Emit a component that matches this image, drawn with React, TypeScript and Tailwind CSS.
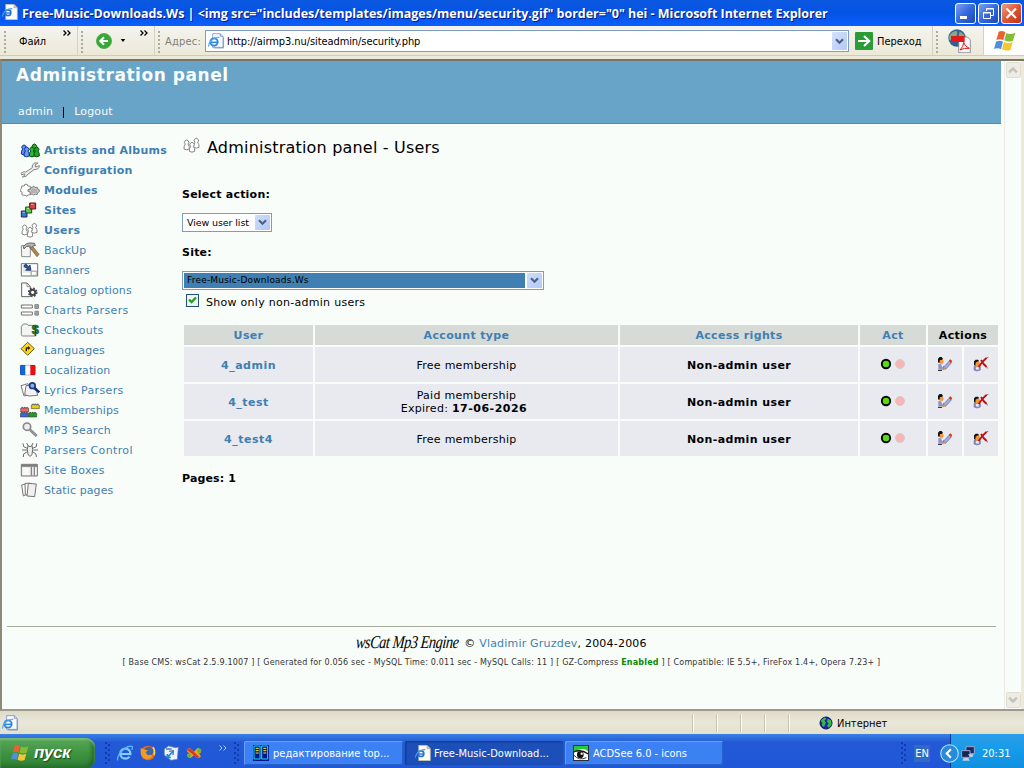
import React from 'react';

type Children = { children?: React.ReactNode };

const VERDANA = "font-['DejaVu_Sans',sans-serif]";
const TAHOMA = "font-['DejaVu_Sans_Condensed','DejaVu_Sans',sans-serif] [font-stretch:condensed]";
const TREBUCHET = "font-['Open_Sans',sans-serif]";

/* ---------- icons: 60 unit boxes drawn at 20px ---------- */

function Icon({ children }: Children) {
  return (
    <svg viewBox="0 0 60 60" className="h-5 w-5 shrink-0" strokeLinejoin="round">
      {children}
    </svg>
  );
}

function Person({ x, y, fill, stroke }: { x: number; y: number; fill: string; stroke: string }) {
  return (
    <path
      transform={`translate(${x} ${y})`}
      d="M5 13A6.5 6.5 0 1 1 13 13Q18 19 17 28Q9 33 1 28Q0 19 5 13Z"
      fill={fill}
      stroke={stroke}
      strokeWidth="3"
    />
  );
}

function UsersShape() {
  return (
    <>
      <Person x={5} y={14} fill="#fff" stroke="#858585" />
      <Person x={34} y={9} fill="#fff" stroke="#858585" />
      <Person x={21} y={21} fill="#fff" stroke="#858585" />
    </>
  );
}

const ArtistsIcon = () => (
  <Icon>
    <Person x={3} y={14} fill="#5a8bff" stroke="#15338c" />
    <Person x={11} y={20} fill="#6b95ff" stroke="#15338c" />
    <Person x={34} y={11} fill="#25b32b" stroke="#064d0c" />
    <Person x={27} y={20} fill="#2cb533" stroke="#064d0c" />
    <Person x={41} y={20} fill="#1fa526" stroke="#064d0c" />
  </Icon>
);
const WrenchIcon = () => (
  <Icon>
    <path
      d="M3 40L11 35L17 36L37 23L37 15Q43 6 54 9L45 15L47 21L58 17Q58 29 42 29L24 42Q21 52 7 51L15 45L13 41L5 45Z"
      fill="#ececec"
      stroke="#848484"
      strokeWidth="3"
    />
  </Icon>
);
const ModulesIcon = () => (
  <Icon>
    <path
      d="M5 18L13 18L14 13L22 13L23 18L31 19L31 27L24 29L24 34L32 36L32 44L23 45L21 49L15 46L6 45L6 36L1 34L1 28L5 26Z"
      fill="#fff"
      stroke="#8a8a8a"
      strokeWidth="3"
    />
    <path
      d="M31 22L38 22L40 18L45 22L52 22L53 27L58 29L58 35L53 38L52 43L45 43L41 45L37 43L30 42L31 36L25 34L25 29L31 28Z"
      fill="#c9c9c9"
      stroke="#858585"
      strokeWidth="3"
    />
    <path d="M36 26v13M42 26v13M48 26v13" stroke="#858585" strokeWidth="2" />
  </Icon>
);
const SitesIcon = () => (
  <Icon>
    <path d="M4 33h17v18H4z" fill="#426fd8" stroke="#1a2a50" strokeWidth="3" />
    <path d="M17 21h18v18H17z" fill="#57cf54" stroke="#1a4b17" strokeWidth="3" />
    <path d="M29 9h18v18H29z" fill="#d44343" stroke="#5a1818" strokeWidth="3" />
    <path d="M8 37h7M21 25h8M33 13h8" stroke="#fff" strokeOpacity=".55" strokeWidth="3" />
  </Icon>
);
const UsersIcon = () => (
  <Icon>
    <UsersShape />
  </Icon>
);
const BackupIcon = () => (
  <Icon>
    <path d="M4 17L25 16L31 23L31 50L5 50Z" fill="#f5f5f5" stroke="#8d8d8d" strokeWidth="3" />
    <path d="M29 22L36 17L57 43L51 50Z" fill="#b28a50" stroke="#654719" strokeWidth="2" />
    <path d="M10 20Q18 8 33 9L44 10L46 17L38 18L34 23L28 18Q18 17 12 27Z" fill="#b7b7b7" stroke="#666" strokeWidth="3" />
  </Icon>
);
const BannersIcon = () => (
  <Icon>
    <rect x="4" y="11" width="49" height="37" fill="#fff" stroke="#707070" strokeWidth="3" />
    <path d="M8 38h24V15H8Z" fill="#e5e5ec" />
    <path d="M33 46V33h18M34 34h15v12H34z" fill="#fff" stroke="#999" strokeWidth="2" />
    <path d="M13 15L18 12L25 20L30 15L33 31L17 31L22 25L12 20Z" fill="#2454a0" stroke="#0c2350" strokeWidth="2" />
  </Icon>
);
const CatalogIcon = () => (
  <Icon>
    <path d="M5 9H21L31 20V50H5Z" fill="#fff" stroke="#606060" strokeWidth="3" />
    <path d="M21 10V20H30" fill="none" stroke="#606060" strokeWidth="2" />
    <circle cx="38" cy="37" r="12" fill="none" stroke="#45484d" strokeWidth="5" strokeDasharray="5 4.4" />
    <circle cx="38" cy="37" r="8" fill="#fff" stroke="#45484d" strokeWidth="6" />
  </Icon>
);
const ChartsIcon = () => (
  <Icon>
    <path d="M4 15h33v9H4zM4 36h33v9H4z" fill="#fff" stroke="#737373" strokeWidth="3" />
    <rect x="43" y="12" width="14" height="15" rx="4" fill="#8b8b8b" />
    <rect x="43" y="32" width="14" height="15" rx="4" fill="#8b8b8b" />
    <path d="M46 17h8M46 22h8M46 37h8M46 42h8" stroke="#bcbcbc" strokeWidth="2" />
  </Icon>
);
const CheckoutsIcon = () => (
  <Icon>
    <path d="M4 20Q4 16 8 16L10 12H21L24 16H42Q47 16 47 20V48H8Q4 48 4 44Z" fill="#f4f4f4" stroke="#858585" strokeWidth="3" />
    <text x="35" y="42" fontSize="38" fontWeight="700" fill="#17902b" stroke="#0a5015" strokeWidth="2" fontFamily="Liberation Sans">
      $
    </text>
  </Icon>
);
const LanguagesIcon = () => (
  <Icon>
    <path d="M23 7L43 26L23 46L3 26Z" fill="#ffd51d" stroke="#6b5a19" strokeWidth="3" />
    <path d="M19 34V24H26" fill="none" stroke="#222" strokeWidth="4" />
    <path d="M24 18L31 24L24 30Z" fill="#222" />
  </Icon>
);
const LocalizationIcon = () => (
  <Icon>
    <rect x="1" y="16" width="45" height="29" rx="3" fill="#fff" />
    <path d="M4 15H16V45H4Q0 45 0 41V19Q0 15 4 15" fill="#1267d8" />
    <path d="M31 15H43Q46 15 46 19V41Q46 45 43 45H31Z" fill="#f00c0c" />
    <rect x="1" y="16" width="45" height="29" rx="3" fill="none" stroke="#202a70" strokeOpacity=".45" strokeWidth="2" />
  </Icon>
);
const LyricsIcon = () => (
  <Icon>
    <path d="M3 17L24 11L33 43L12 48Z" fill="#fff" stroke="#777" strokeWidth="3" />
    <path d="M18 17L45 14L53 46L27 48L14 44Z" fill="#f2f2f5" stroke="#777" strokeWidth="3" />
    <path d="M43 24L58 37" stroke="#152b65" strokeWidth="8" />
    <circle cx="37" cy="17" r="8.5" fill="#8fb0e4" stroke="#1b3c88" strokeWidth="5" />
  </Icon>
);
const Brick = ({ x, y, fill }: { x: number; y: number; fill: string }) => (
  <path
    transform={`translate(${x} ${y})`}
    d="M1 4H4V1H8V4H11V1H15V4H18V1H22V4H25V15H1Z"
    fill={fill}
    stroke="#3a2922"
    strokeWidth="1.6"
  />
);
const MembershipsIcon = () => (
  <Icon>
    <Brick x={33} y={11} fill="#dfcf1d" />
    <Brick x={1} y={21} fill="#e76b6b" />
    <Brick x={0} y={36} fill="#3869da" />
    <Brick x={25} y={36} fill="#1f9e2c" />
  </Icon>
);
const SearchIcon = () => (
  <Icon>
    <path d="M30 29L50 48" stroke="#818181" strokeWidth="8" />
    <path d="M32 31L49 47" stroke="#bdbdbd" strokeWidth="2" />
    <circle cx="21" cy="20" r="11" fill="#ededed" stroke="#858585" strokeWidth="5" />
  </Icon>
);
const SpiderIcon = () => (
  <Icon>
    <path
      d="M22 25L11 20L9 10M38 25L49 20L50 10M21 30H6M40 30H54M22 35L11 42L10 51M38 35L48 42L49 51M25 18L20 9M35 18L39 9"
      fill="none"
      stroke="#6c6c6c"
      strokeWidth="3"
    />
    <path d="M24 17L30 20L36 17L38 28L36 44L30 49L24 44L22 28Z" fill="#efefef" stroke="#6c6c6c" strokeWidth="3" />
  </Icon>
);
const BoxesIcon = () => (
  <Icon>
    <rect x="4" y="13" width="48" height="35" fill="#e7e7e7" stroke="#747474" strokeWidth="3" />
    <path d="M5 17H52" stroke="#7d7d7d" strokeWidth="7" />
    <path d="M8 23H29V45H8Z" fill="#f8f8f8" />
    <path d="M34 21V47M43 21V47" stroke="#707070" strokeWidth="3" />
    <path d="M47.5 24V45" stroke="#fff" strokeWidth="3" />
  </Icon>
);
const PagesIcon = () => (
  <Icon>
    <path d="M5 15L17 12V44L10 48Z" fill="#fff" stroke="#777" strokeWidth="3" />
    <path d="M15 10H34V45H16Z" fill="#fff" stroke="#777" strokeWidth="3" />
    <path d="M25 10L49 12L44 50L21 48Z" fill="#f0f0f0" stroke="#747474" strokeWidth="3" />
  </Icon>
);

function IePageIcon({ className }: { className: string }) {
  return (
    <svg viewBox="0 0 48 48" className={className}>
      <path d="M14 2H37L45 10V43H14Z" fill="#f8faff" stroke="#5f7ebd" strokeWidth="2" />
      <path d="M37 2V10H45" fill="#d3def2" stroke="#5f7ebd" strokeWidth="2" />
      <path d="M17 45H47V13" fill="none" stroke="#6379aa" strokeWidth="2" />
      <circle cx="18" cy="27" r="11" fill="#fff" fillOpacity=".7" stroke="#2c86dd" strokeWidth="5.5" />
      <path d="M8 28H29" stroke="#2c86dd" strokeWidth="4.5" />
      <path d="M2 41C0 29 17 10 34 13" fill="none" stroke="#55a9ef" strokeWidth="3.5" />
    </svg>
  );
}

function IeDocumentIcon({ className }: { className: string }) {
  return (
    <svg viewBox="0 0 48 48" className={className}>
      <path d="M11 1H36L46 11V47H11Z" fill="#fbfbf6" stroke="#b5b39f" strokeWidth="2" />
      <path d="M36 1V11H46Z" fill="#d6d4c6" stroke="#8f8d80" strokeWidth="1.5" />
      <circle cx="18" cy="26" r="8.5" fill="#fff" stroke="#2370d8" strokeWidth="5" />
      <path d="M11 27H27" stroke="#2370d8" strokeWidth="4" />
      <path d="M2 38C0 29 14 12 31 14" fill="none" stroke="#4d9cec" strokeWidth="3.5" />
    </svg>
  );
}

function WindowsFlag({ className }: { className: string }) {
  return (
    <svg viewBox="0 0 72 66" className={className}>
      <path d="M17 5Q27 0 37 7L31 31Q20 25 10 31Z" fill="#e9632e" />
      <path d="M40 9Q51 15 67 8L60 32Q47 38 34 31Z" fill="#83bd35" />
      <path d="M9 35Q20 29 30 35L24 58Q14 52 3 57Z" fill="#4e90dc" />
      <path d="M33 36Q46 42 59 36L53 59Q41 65 27 58Z" fill="#f6c52f" />
    </svg>
  );
}

/* ---------- window chrome ---------- */

function Chevron({ color = '#4d6185', className = 'h-[9px] w-[9px]' }: { color?: string; className?: string }) {
  return (
    <svg viewBox="0 0 9 9" className={className}>
      <path d="M1 2.3L4.5 5.8L8 2.3" fill="none" stroke={color} strokeWidth="2.2" />
    </svg>
  );
}

function Grip() {
  return (
    <div className="flex h-[24px] w-[3px] shrink-0 flex-col justify-between py-[1px]">
      {[0, 1, 2, 3, 4, 5].map((n) => (
        <i key={n} className="h-[2px] w-[2px] bg-[#aeab9c]" />
      ))}
    </div>
  );
}

function CaptionButton({ close, children }: Children & { close?: boolean }) {
  return (
    <div
      className={
        close
          ? 'flex h-[21px] w-[21px] items-center justify-center rounded-[3px] border border-white bg-linear-to-br from-[#ee9c83] via-[#df5534] to-[#bd3314]'
          : 'flex h-[21px] w-[21px] items-center justify-center rounded-[3px] border border-white bg-linear-to-br from-[#7da0ef] via-[#3468dc] to-[#1c49bd]'
      }
    >
      <svg viewBox="0 0 19 19" className="h-[19px] w-[19px]" fill="none" stroke="#fff">
        {children}
      </svg>
    </div>
  );
}

function TitleBar() {
  return (
    <header className="flex h-[26px] shrink-0 items-center bg-linear-to-b from-[#0b58df] via-[#0453e4] to-[#0a5fff] pr-[2px] pl-[2px]">
      <IeDocumentIcon className="mb-[2px] h-4 w-4 shrink-0" />
      <h1
        className={`${TREBUCHET} ml-[4px] w-[934px] pt-[2px] text-[12.5px] font-bold tracking-[-0.02px] whitespace-pre text-white [text-shadow:1px_1px_0_#0a1883]`}
      >
        {'Free-Music-Downloads.Ws | <img src="includes/templates/images/menu/security.gif" border="0" hei - Microsoft Internet Explorer'}
      </h1>
      <div className="flex gap-[2px]">
        <CaptionButton>
          <path d="M4 13.5H11" strokeWidth="3" />
        </CaptionButton>
        <CaptionButton>
          <path d="M7.5 7V4.5H14.5V11.5H12M7 5H15" strokeWidth="1" />
          <path d="M4.5 8.5H11.5V14.5H4.5ZM4 9H12" strokeWidth="1" />
        </CaptionButton>
        <CaptionButton close>
          <path d="M4.5 4.5L14 14M14 4.5L4.5 14" strokeWidth="2.2" />
        </CaptionButton>
      </div>
    </header>
  );
}

function DoubleArrow() {
  return (
    <svg viewBox="0 0 8 6" className="h-[6px] w-[8px]">
      <path d="M.5 .5L3 3L.5 5.5M4.5 .5L7 3L4.5 5.5" fill="none" stroke="#000" strokeWidth="1.3" />
    </svg>
  );
}

function Toolbar() {
  return (
    <nav className={`${TAHOMA} flex h-[33px] shrink-0 flex-col bg-[#ece9d8] text-[11px] text-black`}>
      <div className="flex h-[30px] border-b border-[#d0ccba] bg-linear-to-b from-[#f4f4ef] to-[#ece9d8]">
        <div className="flex w-[78px] border-r border-[#d5d2c2] pt-[4px] pl-[4px]">
          <Grip />
          <span className="ml-[12px] pt-[4px] tracking-[-0.1px]">Файл</span>
          <span className="ml-auto pr-[6px] pt-0">
            <DoubleArrow />
          </span>
        </div>
        <div className="flex w-[77px] border-r border-[#d5d2c2] pt-[4px] pl-[3px]">
          <Grip />
          <svg viewBox="0 0 16 16" className="mt-[3px] ml-[12px] h-4 w-4">
            <circle cx="8" cy="8" r="7.5" fill="#35a935" stroke="#5aa957" />
            <path d="M12 8H4.5M8 4.3L4.3 8L8 11.7" fill="none" stroke="#fff" strokeWidth="2" />
          </svg>
          <svg viewBox="0 0 6 4" className="mt-[9px] ml-[8px] h-[3px] w-[6px]">
            <path d="M0 0H6L3 4Z" />
          </svg>
          <span className="ml-auto pr-[6px]">
            <DoubleArrow />
          </span>
        </div>
        <div className="flex w-[778px] border-r border-[#d5d2c2] pt-[4px] pl-[3px]">
          <Grip />
          <span className="ml-[4px] w-[40px] pt-[4px] tracking-[0.2px] text-[#82807a]">Адрес:</span>
          <div className="flex h-[22px] w-[644px] items-center border border-[#7f9db9] bg-white pr-[1px] pl-[2px]">
            <IePageIcon className="h-4 w-4" />
            <span className="ml-[3px] flex-1 pt-[2px] tracking-[-0.08px]">http://airmp3.nu/siteadmin/security.php</span>
            <span className="flex h-[18px] w-[15px] items-center justify-center rounded-[1px] bg-linear-to-br from-[#d5e2fd] to-[#b3c8f5]">
              <Chevron />
            </span>
          </div>
          <svg viewBox="0 0 18 18" className="mt-[2px] ml-[6px] h-[18px] w-[18px]">
            <rect width="18" height="18" rx="1" fill="#2b9b35" />
            <path d="M3 9H14M9 4L14.2 9L9 14" fill="none" stroke="#fff" strokeWidth="2" />
          </svg>
          <span className="ml-[4px] pt-[4px]">Переход</span>
        </div>
        <div className="flex w-[51px] border-r border-[#d5d2c2] pt-[4px] pl-[3px]">
          <Grip />
          <svg viewBox="0 0 72 72" className="-mt-[1px] ml-[8px] h-6 w-6">
            <circle cx="30" cy="27" r="26" fill="#365f91" />
            <path d="M8 18Q19 4 30 6L31 19L18 25L13 35L5 30ZM38 7L53 19L46 26L35 20Z" fill="#86a78b" />
            <path d="M35 24H62L70 33V71H35Z" fill="#f8f8fa" stroke="#667" strokeWidth="2" />
            <path d="M12 21H53V39H12Z" fill="#e01b18" />
            <path d="M39 63Q50 52 50 40Q53 53 67 58Q51 56 39 63" fill="none" stroke="#e01b18" strokeWidth="3" />
          </svg>
        </div>
        <div className="flex flex-1 items-center justify-center bg-white pl-[2px]">
          <WindowsFlag className="h-[22px] w-[24px]" />
        </div>
      </div>
    </nav>
  );
}

/* ---------- page ---------- */

const BOLD = 'font-bold tracking-[0.28px]';
const PLAIN = 'tracking-[0.27px]';
const TIGHT = 'tracking-[0.1px]';
const LOOSE = 'tracking-[0.36px]';

const MENU: { label: string; icon: React.ComponentType; cls: string }[] = [
  { label: 'Artists and Albums', icon: ArtistsIcon, cls: BOLD },
  { label: 'Configuration', icon: WrenchIcon, cls: BOLD },
  { label: 'Modules', icon: ModulesIcon, cls: BOLD },
  { label: 'Sites', icon: SitesIcon, cls: BOLD },
  { label: 'Users', icon: UsersIcon, cls: BOLD },
  { label: 'BackUp', icon: BackupIcon, cls: TIGHT },
  { label: 'Banners', icon: BannersIcon, cls: TIGHT },
  { label: 'Catalog options', icon: CatalogIcon, cls: TIGHT },
  { label: 'Charts Parsers', icon: ChartsIcon, cls: LOOSE },
  { label: 'Checkouts', icon: CheckoutsIcon, cls: PLAIN },
  { label: 'Languages', icon: LanguagesIcon, cls: TIGHT },
  { label: 'Localization', icon: LocalizationIcon, cls: TIGHT },
  { label: 'Lyrics Parsers', icon: LyricsIcon, cls: LOOSE },
  { label: 'Memberships', icon: MembershipsIcon, cls: TIGHT },
  { label: 'MP3 Search', icon: SearchIcon, cls: PLAIN },
  { label: 'Parsers Control', icon: SpiderIcon, cls: LOOSE },
  { label: 'Site Boxes', icon: BoxesIcon, cls: LOOSE },
  { label: 'Static pages', icon: PagesIcon, cls: TIGHT },
];

function Sidebar() {
  return (
    <aside className="w-[180px] shrink-0 pt-[16px] pl-[18px]">
      <ul>
        {MENU.map(({ label, icon: MenuIcon, cls }) => (
          <li key={label} className="flex h-5 items-center gap-[4px] whitespace-nowrap text-[#3f7fb2]">
            <MenuIcon />
            <a className={`${cls} pt-[2px]`}>{label}</a>
          </li>
        ))}
      </ul>
    </aside>
  );
}

function SelectArrow() {
  return (
    <span className="flex h-[15px] w-[15px] shrink-0 items-center justify-center rounded-[1px] bg-linear-to-br from-[#d0defc] to-[#b1c7f4]">
      <Chevron />
    </span>
  );
}

function EditUserIcon() {
  return (
    <svg viewBox="0 0 48 48" className="h-4 w-4">
      <path d="M4 24L14 25L22 31L20 40H4Z" fill="#8e93ce" />
      <path d="M13 25L19 27L16 35Z" fill="#fff" />
      <path d="M19 34L37 15L43 21L26 40Z" fill="#a2a9df" stroke="#6267a4" strokeWidth="2" />
      <path d="M35 14L40 10L46 15L42 22Z" fill="#d9401f" />
      <circle cx="13" cy="17" r="7" fill="#f09a3b" />
      <path d="M3 19V8L8 3H14L18 9L14 12L9 12L7 21Z" fill="#111" />
      <path d="M3 43H15" stroke="#111" strokeWidth="3" />
      <path d="M15 39L22 34L26 40L18 43Z" fill="#c5983a" />
    </svg>
  );
}

function DeleteUserIcon() {
  return (
    <svg viewBox="0 0 48 48" className="h-4 w-4">
      <path d="M3 42L4 30L12 28L22 32L22 42L12 45Z" fill="#8a90cb" stroke="#666b9d" strokeWidth="2" />
      <path d="M9 40V34L17 33L17 41Z" fill="#eceffa" />
      <circle cx="13" cy="24" r="8" fill="#f39733" />
      <path d="M3 27V16L8 11H15L19 16L12 17L8 20L7 29Z" fill="#151515" />
      <path d="M17 33Q26 17 41 5M24 12Q31 25 41 33" fill="none" stroke="#bd1010" strokeWidth="5.5" />
      <path d="M41 35l4 1M42 5l4-1" stroke="#777" strokeWidth="3" />
    </svg>
  );
}

function Cell({ children, className = '' }: Children & { className?: string }) {
  return (
    <div className={`flex h-[35px] flex-col items-center justify-center bg-[#e8eaf0] leading-[13px] ${className}`}>{children}</div>
  );
}

function UsersTable() {
  const users = [
    { name: '4_admin', paid: false },
    { name: '4_test', paid: true },
    { name: '4_test4', paid: false },
  ];
  const head = 'flex h-5 items-center justify-center bg-[#d7dbd7] pt-[2px] font-bold tracking-[0.35px]';
  return (
    <div className="mt-[17px] ml-[2px] grid w-[814px] grid-cols-[129px_303px_238px_66px_34px_34px] gap-[2px]">
      <div className={`${head} text-[#3f7fb2]`}>User</div>
      <div className={`${head} text-[#3f7fb2]`}>Account type</div>
      <div className={`${head} text-[#3f7fb2]`}>Access rights</div>
      <div className={`${head} text-[#3f7fb2]`}>Act</div>
      <div className={`${head} col-span-2`}>Actions</div>
      {users.map((u) => (
        <React.Fragment key={u.name}>
          <Cell className="pt-[2px] font-bold tracking-[0.5px] text-[#3f7fb2]">{u.name}</Cell>
          {u.paid ? (
            <Cell className="tracking-[0.27px]">
              <span>Paid membership</span>
              <span className="pr-[5px]">
                Expired: <b className="tracking-[0.5px]">17-06-2026</b>
              </span>
            </Cell>
          ) : (
            <Cell className="pt-[2px] tracking-[0.27px]">Free membership</Cell>
          )}
          <Cell className="pt-[2px] font-bold tracking-[0.4px]">Non-admin user</Cell>
          <Cell>
            <svg viewBox="0 0 26 12" className="mb-[1px] h-3 w-[26px]">
              <circle cx="6" cy="6" r="4.2" fill="#55dd0c" stroke="#000" strokeWidth="1.9" />
              <circle cx="20" cy="6" r="4.5" fill="#f9b4b4" stroke="#d4caca" strokeWidth="1" />
            </svg>
          </Cell>
          <Cell className="pb-[1px]">
            <EditUserIcon />
          </Cell>
          <Cell className="pb-[1px]">
            <DeleteUserIcon />
          </Cell>
        </React.Fragment>
      ))}
    </div>
  );
}

function Content() {
  return (
    <section className="flex-1">
      <div className="flex h-[45px] items-start pt-[11px]">
        <svg viewBox="0 0 60 60" className="h-5 w-5 shrink-0">
          <UsersShape />
        </svg>
        <h3 className="ml-[5px] pt-[1px] text-[16px] leading-[24px] tracking-[0.2px] whitespace-nowrap">Administration panel - Users</h3>
      </div>
      <div className="flex h-[44px] items-end pb-[11px] leading-[15px] font-bold tracking-[0.22px]">Select action:</div>
      <div className="flex h-[19px] w-[90px] items-center border border-[#7f9db9] bg-white pr-[1px] pl-[4px] text-[9.5px]">
        <span className="flex-1 pt-[1px] tracking-[-0.1px] whitespace-nowrap">View user list</span>
        <SelectArrow />
      </div>
      <div className="flex h-[39px] items-center pt-[4px] font-bold tracking-[0.22px]">Site:</div>
      <div className="flex h-[19px] w-[362px] items-center gap-[2px] border border-[#7f9db9] bg-white px-[1px] text-[9px]">
        <span className="flex h-[15px] flex-1 items-center bg-[#3f7fb2] pt-[1px] pl-[3px] tracking-[0.2px]">Free-Music-Downloads.Ws</span>
        <SelectArrow />
      </div>
      <div className="flex h-[18px] items-start pt-[4px] pl-[4px]">
        <span className="flex h-[13px] w-[13px] items-center justify-center border border-[#1c5180] bg-[#f3f3ef]">
          <svg viewBox="0 0 9 9" className="h-[9px] w-[9px]">
            <path d="M1 3.5L3.5 6L8 1.5" fill="none" stroke="#21a121" strokeWidth="2.3" />
          </svg>
        </span>
        <span className="mt-[2px] ml-[7px] leading-[13px] tracking-[0.28px]">Show only non-admin users</span>
      </div>
      <UsersTable />
      <div className="pt-[15px] font-bold tracking-[0.15px]">Pages: 1</div>
    </section>
  );
}

function Footer() {
  return (
    <footer className="mx-[5px] flex h-[83px] w-[989px] flex-col items-center border-t border-[#a5ad98] pt-[6px]">
      <div className="flex h-[20px] items-center whitespace-nowrap">
        <span className="mr-[4px] w-[104px]">
          <span className="inline-block origin-left scale-x-[0.8] -skew-x-6 font-['Liberation_Serif',serif] text-[18px] leading-5 tracking-[-0.6px] italic">
            wsCat Mp3 Engine
          </span>
        </span>
        <span className="pt-[3px] tracking-[0.2px]">
          © <a className="text-[#3f7fb2]">Vladimir Gruzdev</a>, 2004-2006
        </span>
      </div>
      <div className="mt-[3px] text-[8px] leading-[13px] tracking-[0.19px] whitespace-nowrap text-[#333]">
        [ Base CMS: wsCat 2.5.9.1007 ] [ Generated for 0.056 sec - MySQL Time: 0.011 sec - MySQL Calls: 11 ] [ GZ-Compress{' '}
        <b className="text-[#088a08]">Enabled</b> ] [ Compatible: IE 5.5+, FireFox 1.4+, Opera 7.23+ ]
      </div>
    </footer>
  );
}

function ScrollButton({ up }: { up?: boolean }) {
  return (
    <div className="flex h-[16px] w-[15px] items-center justify-center rounded-[2px] border border-[#dfddd0] bg-[#eeede5]">
      <Chevron color="#c5c3b8" className={up ? 'h-[10px] w-[10px] rotate-180' : 'h-[10px] w-[10px]'} />
    </div>
  );
}

function Page() {
  return (
    <main className="flex h-[652px] shrink-0 border-t-2 border-b-2 border-l-2 border-t-[#777468] border-b-[#9d9a8d] border-l-[#8d8a7c] bg-[#f8fdf9]">
      <div className={`${VERDANA} flex w-[999px] flex-col text-[11px] text-black`}>
        <div className="flex h-[63px] flex-col border-b border-[#5d89a8] bg-[#68a3c8] pl-[14px] text-[#f8fdf9]">
          <h2 className="h-[42px] text-[17px] leading-[28px] font-bold tracking-[0.55px]">Administration panel</h2>
          <div className="flex items-center pt-[1px] pl-[2px] leading-[16px] tracking-[0.15px]">
            <a>admin</a>
            <i className="mx-[10px] h-[11px] w-px bg-black" />
            <a>Logout</a>
          </div>
        </div>
        <div className="flex flex-1">
          <Sidebar />
          <Content />
        </div>
        <Footer />
      </div>
      <div className="ml-[3px] flex w-[18px] flex-col items-center justify-between border-x border-[#ebeae4] pt-[1px] pb-[1px]">
        <ScrollButton up />
        <ScrollButton />
      </div>
      <div className="flex-1 bg-[#ece9d8]" />
    </main>
  );
}

/* ---------- status bar and taskbar ---------- */

function Separator() {
  return <i className="h-[18px] w-[24px] shrink-0 border-l border-[#c7c5b2] shadow-[inset_1px_0_#fff]" />;
}

function StatusBar() {
  return (
    <div className={`${TAHOMA} flex h-[23px] shrink-0 items-center bg-linear-to-b from-[#dedbca] via-[#e9e7d8] to-[#e3dfcb] text-[11px]`}>
      <span className="w-[692px] pl-[2px]">
        <IePageIcon className="h-4 w-4" />
      </span>
      <Separator />
      <Separator />
      <Separator />
      <Separator />
      <Separator />
      <svg viewBox="0 0 42 42" className="ml-[7px] h-[14px] w-[14px]">
        <circle cx="21" cy="21" r="18" fill="#1527b5" stroke="#0b174c" strokeWidth="3" />
        <path d="M5 14L17 4L22 9L16 14L21 20L15 32L9 29L10 21ZM26 8L36 13L38 25L30 35L24 29L29 23L24 17Z" fill="#38b944" />
      </svg>
      <span className="ml-[4px] pt-[3px]">Интернет</span>
    </div>
  );
}

function BarGrip() {
  return (
    <svg viewBox="0 0 6 22" className="h-[22px] w-[6px] shrink-0">
      <path d="M1 0v22" stroke="#123bb0" strokeWidth="2" strokeDasharray="2 3" />
      <path d="M4 2v20" stroke="#123bb0" strokeWidth="2" strokeDasharray="2 3" />
    </svg>
  );
}

function Taskbar() {
  return (
    <footer
      className={`${TAHOMA} flex h-[34px] shrink-0 bg-linear-to-b from-[#3a80e4] from-0% via-[#2359d5] via-25% to-[#1f57d8] text-[11px] text-white`}
    >
      <div className="mt-[4px] flex h-[30px] w-[95px] items-center rounded-r-[9px] bg-linear-to-b from-[#5aa85b] via-[#3d9440] to-[#307f33] pl-[10px] shadow-[inset_0_2px_2px_#75ba75,inset_-3px_-2px_4px_#226a29]">
        <WindowsFlag className="h-[18px] w-[20px]" />
        <b className="ml-[4px] font-['Liberation_Sans',sans-serif] text-[17px] leading-5 tracking-[-0.4px] italic [text-shadow:1px_1px_1px_#174718]">
          пуск
        </b>
      </div>
      <div className="flex w-[149px] items-center pt-[4px] pl-[10px]">
        <BarGrip />
        <svg viewBox="0 0 48 48" className="ml-[6px] h-4 w-4">
          <circle cx="25" cy="26" r="15" fill="none" stroke="#82cdff" strokeWidth="7" />
          <path d="M12 27H40" stroke="#82cdff" strokeWidth="6" />
          <path d="M36 33H46" stroke="#2359d5" strokeWidth="5" />
          <path d="M2 46C-2 31 26 1 44 4Q49 5 44 15" fill="none" stroke="#59b9f7" strokeWidth="4" />
        </svg>
        <svg viewBox="0 0 48 48" className="ml-[7px] h-4 w-4">
          <circle cx="24" cy="24" r="22" fill="#e76b19" />
          <circle cx="26" cy="19" r="14" fill="#3c67aa" />
          <path d="M2 9L15 14L24 16L17 22L23 31L33 29L38 34Q30 45 18 42Q2 37 2 20Z" fill="#f29a29" />
          <path d="M39 6Q46 16 42 30" fill="none" stroke="#ffd34c" strokeWidth="5" />
        </svg>
        <svg viewBox="0 0 48 48" className="ml-[7px] h-4 w-4">
          <path d="M4 12L17 3L38 8L46 6L43 43L24 46L4 30Z" fill="#edf2fb" stroke="#6b81a8" strokeWidth="2" />
          <path d="M9 12L26 12M18 19L31 17L30 30" stroke="#4775be" strokeWidth="4" fill="none" />
          <path d="M31 18L14 36M13 27V37H23" fill="none" stroke="#188bd7" strokeWidth="5" />
        </svg>
        <svg viewBox="0 0 48 48" className="ml-[7px] h-4 w-4">
          <path d="M2 15Q6 8 14 11L24 20L34 10Q44 8 46 17Q46 24 38 26Q46 30 43 37Q36 42 30 37L24 30L14 39Q4 39 3 30Q5 25 11 25Q2 22 2 15Z" fill="#f3a219" />
          <path d="M2 14Q8 8 15 12L40 36L34 40L22 29Z" fill="#df3428" />
          <path d="M37 9Q45 10 46 18L38 25L34 20ZM3 30L11 25L17 31L10 39Z" fill="#5dbb31" />
        </svg>
        <svg viewBox="0 0 8 6" className="mb-[11px] ml-[17px] h-[6px] w-[8px]">
          <path d="M.5 .5L3 3L.5 5.5M4.5 .5L7 3L4.5 5.5" fill="none" stroke="#a9ceff" />
        </svg>
        <span className="ml-[7px]">
          <BarGrip />
        </span>
      </div>
      <div className="flex gap-[2px] pt-[7px]">
        <div className="flex h-[24px] w-[159px] items-center rounded-[2px] bg-[#3c81f3] pl-[9px] shadow-[inset_1px_1px_#689ef7,inset_-1px_-1px_#2762c9]">
          <svg viewBox="0 0 48 48" className="h-4 w-4">
            <path d="M0 0H48V48H0Z" fill="#001087" />
            <path d="M3 3H21V42H3ZM26 3H44V42H26Z" fill="#001087" stroke="#00eaff" strokeWidth="3" />
            <path d="M8 10H17M8 17H17M8 24H17M31 10H40M31 17H40M31 24H40" stroke="#fff200" strokeWidth="3" />
          </svg>
          <span className="ml-[4px] pt-[2px] tracking-[0.05px]">редактирование top...</span>
        </div>
        <div className="flex h-[24px] w-[158px] items-center rounded-[2px] bg-[#1c50b8] pl-[10px] shadow-[inset_1px_1px_2px_#103887]">
          <IeDocumentIcon className="h-4 w-4" />
          <span className="ml-[3px] pt-[3px]">Free-Music-Download...</span>
        </div>
        <div className="flex h-[24px] w-[158px] items-center rounded-[2px] bg-[#3c81f3] pl-[8px] shadow-[inset_1px_1px_#689ef7,inset_-1px_-1px_#2762c9]">
          <svg viewBox="0 0 48 48" className="h-4 w-4">
            <path d="M1 1H47V47H1Z" fill="#fff" stroke="#111" strokeWidth="3" />
            <path d="M3 3H45V19Q30 5 3 20Z" fill="#27c934" />
            <path d="M2 21Q23 11 46 27" stroke="#111" strokeWidth="4" fill="none" />
            <circle cx="22" cy="29" r="10" fill="#111" />
            <circle cx="26" cy="26" r="3.5" fill="#fff" />
            <path d="M3 31Q18 48 40 38" stroke="#333" strokeWidth="3" fill="none" />
          </svg>
          <span className="ml-[4px] pt-[2px]">ACDSee 6.0 - icons</span>
        </div>
      </div>
      <div className="ml-auto flex w-[49px] items-center justify-between pt-[4px] pr-[20px]">
        <BarGrip />
        <span className="flex h-[17px] w-[16px] items-center justify-center bg-[#316ac5] pt-[2px]">EN</span>
      </div>
      <div className="flex w-[74px] items-center bg-linear-to-b from-[#2b9de9] via-[#139bea] to-[#118fdf] pt-[4px] shadow-[inset_1px_0_#0b3797]">
        <svg viewBox="0 0 54 54" className="-ml-[10px] h-[19px] w-[19px] shrink-0">
          <circle cx="27" cy="27" r="25" fill="#268bdd" stroke="#b6e7ff" strokeWidth="3" />
          <path d="M31 15L19 27L31 39" fill="none" stroke="#fff" strokeWidth="6" />
        </svg>
        <svg viewBox="0 0 42 45" className="ml-[2px] h-[15px] w-[14px] shrink-0">
          <path d="M15 2H40V23H15Z" fill="#162b65" stroke="#9ba5ca" strokeWidth="3" />
          <path d="M2 14H27V34H2Z" fill="#142555" stroke="#9ba5ca" strokeWidth="3" />
          <path d="M21 25H38L34 33H27M8 36H22L26 44H4Z" fill="#c7cce2" />
        </svg>
        <span className="ml-[7px] pt-[2px]">20:31</span>
      </div>
    </footer>
  );
}

export default function App() {
  return (
    <div className="flex h-[768px] w-[1024px] flex-col overflow-hidden bg-[#ece9d8]">
      <TitleBar />
      <Toolbar />
      <Page />
      <StatusBar />
      <Taskbar />
    </div>
  );
}
